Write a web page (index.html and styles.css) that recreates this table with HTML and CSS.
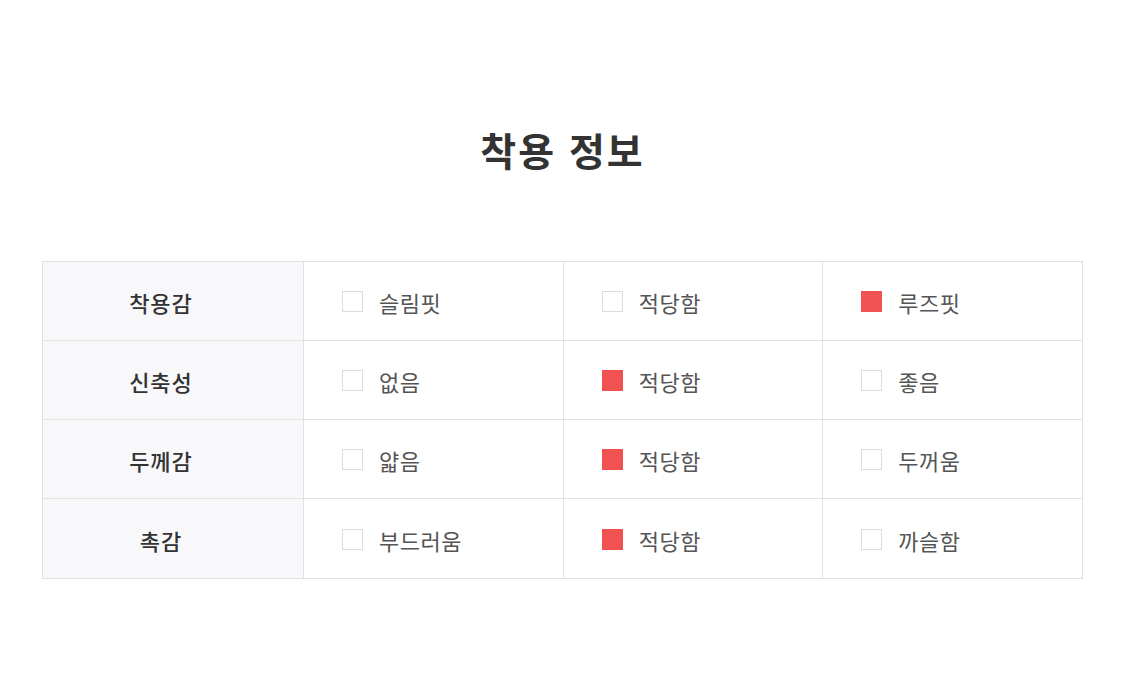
FILE: index.html
```html
<!DOCTYPE html>
<html lang="ko">
<head>
<meta charset="utf-8">
<link rel="stylesheet" href="styles.css">
</head>
<body>
<div class="page">
  <h2 class="title">착용 정보</h2>
  <table class="fit">
    <tr>
      <th>착용감</th>
      <td><span class="box"></span>슬림핏</td>
      <td><span class="box"></span>적당함</td>
      <td><span class="box on"></span>루즈핏</td>
    </tr>
    <tr>
      <th>신축성</th>
      <td><span class="box"></span>없음</td>
      <td><span class="box on"></span>적당함</td>
      <td><span class="box"></span>좋음</td>
    </tr>
    <tr>
      <th>두께감</th>
      <td><span class="box"></span>얇음</td>
      <td><span class="box on"></span>적당함</td>
      <td><span class="box"></span>두꺼움</td>
    </tr>
    <tr class="last">
      <th>촉감</th>
      <td><span class="box"></span>부드러움</td>
      <td><span class="box on"></span>적당함</td>
      <td><span class="box"></span>까슬함</td>
    </tr>
  </table>
</div>
</body>
</html>
```

FILE: styles.css
```css
* { box-sizing: border-box; }
html, body { margin: 0; padding: 0; background: #fff; }
body { font-family: "Noto Sans CJK KR", "Noto Sans", sans-serif; color: #333; }
.page { padding: 124px 42px 0 42px; }
.title {
  margin: 0;
  text-align: center;
  font-size: 39px;
  font-weight: 700;
  line-height: 50px;
  color: #333;
  letter-spacing: 2px;
}
.fit {
  margin-top: 87px;
  width: 1041px;
  border-collapse: collapse;
  table-layout: fixed;
}
.fit th, .fit td {
  border: 1px solid #e1e1e1;
  height: 79px;
  font-size: 22px;
  padding: 0;
  padding-top: 2px;
  vertical-align: middle;
}
.fit .last th, .fit .last td { height: 80px; }
.fit th {
  width: 261px;
  background: #f8f8fa;
  font-weight: 500;
  color: #333;
  text-align: center;
  padding-right: 24px;
  letter-spacing: 1px;
}
.fit td {
  padding-left: 38px;
  color: #555;
  font-weight: 400;
  white-space: nowrap;
  letter-spacing: 0.5px;
}
.box {
  display: inline-block;
  width: 21px;
  height: 21px;
  border: 1px solid #dcdcdc;
  background: #fff;
  vertical-align: 0px;
  margin-right: 16px;
}
.box.on {
  background: #f05252;
  border-color: #f05252;
}
```
